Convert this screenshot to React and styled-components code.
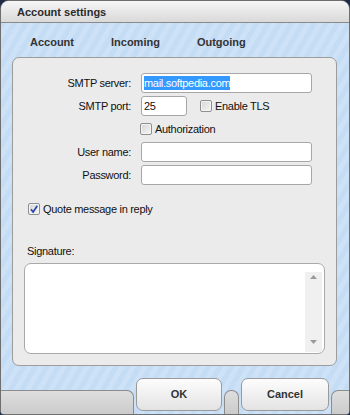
import styled, { createGlobalStyle } from "styled-components";

const GlobalStyle = createGlobalStyle`
  html, body {
    margin: 0;
    padding: 0;
    background: #1f2c48;
  }
  body {
    width: 350px;
    height: 415px;
    overflow: hidden;
    font-family: "Liberation Sans", Arial, sans-serif;
  }
`;

const Window = styled.div`
  width: 350px;
  height: 415px;
  box-sizing: border-box;
  border: 1px solid #6e6e6e;
  border-radius: 9px 9px 4px 4px;
  overflow: hidden;
  display: flex;
  flex-direction: column;
  background: repeating-linear-gradient(
    120deg,
    #c5dcf5 0px,
    #c5dcf5 5px,
    #cde1f7 5px,
    #cde1f7 10px
  );
`;

const TitleBar = styled.div`
  height: 21px;
  display: flex;
  align-items: center;
  padding-left: 16px;
  border-bottom: 1px solid #8a8a8a;
  background: linear-gradient(#f6f6f6, #d9d9d9);
  font-size: 11px;
  font-weight: bold;
  color: #2b2b2b;
`;

const Tabs = styled.div`
  height: 34px;
  box-sizing: border-box;
  padding: 4px 0 0 29px;
  display: flex;
  align-items: center;
  gap: 37px;
`;

const Tab = styled.span`
  font-size: 11px;
  font-weight: bold;
  color: #333;
`;

const Panel = styled.div`
  height: 309px;
  margin: 0 12px 0 11px;
  box-sizing: border-box;
  padding: 15px 11px 11px 11px;
  border: 1px solid #9c9c9c;
  border-radius: 7px;
  background: #ebebeb;
  display: flex;
  flex-direction: column;
  font-size: 11px;
  letter-spacing: -0.3px;
  color: #111;
`;

const FormGrid = styled.div`
  display: grid;
  grid-template-columns: 107px 171px;
  grid-auto-rows: 20px;
  column-gap: 10px;
  row-gap: 3px;
  align-items: center;
`;

const Label = styled.label`
  text-align: right;
`;

const fieldCss = `
  height: 20px;
  box-sizing: border-box;
  border: 1px solid #a7a7a7;
  border-radius: 3px;
  background: #fff;
  padding: 0 2px;
  font-family: inherit;
  font-size: 11px;
  letter-spacing: -0.3px;
  color: #111;
  outline: none;
`;

const Field = styled.input`
  ${fieldCss}
  width: ${(p) => p.$w || 171}px;
`;

const SelectedField = styled.div`
  ${fieldCss}
  width: 171px;
  display: flex;
  align-items: center;
`;

const Selection = styled.span`
  background: #3399ff;
  color: #fff;
  line-height: 14px;
`;

const Inline = styled.div`
  display: flex;
  align-items: center;
  gap: ${(p) => p.$gap || 3}px;
  margin-left: ${(p) => p.$indent || 0}px;
`;

const Box = styled.span`
  width: 12px;
  height: 12px;
  box-sizing: border-box;
  border: 1px solid #8e8f8f;
  border-radius: 2px;
  background: linear-gradient(135deg, #d6d6d6, #f5f5f5);
  box-shadow: inset 0 0 0 1px #f4f4f4;
  display: flex;
  align-items: center;
  justify-content: center;
  flex: none;
`;

const Check = ({ checked }) => (
  <Box>
    {checked && (
      <svg width="10" height="10" viewBox="0 0 10 10">
        <path
          d="M2 5.2 L4.1 8 L8.3 1.8"
          fill="none"
          stroke="#2b44a8"
          strokeWidth="1.6"
        />
      </svg>
    )}
  </Box>
);

const QuoteRow = styled(Inline)`
  height: 14px;
  margin-top: 17px;
`;

const SignatureLabel = styled.div`
  line-height: 14px;
  margin: 28px 0 0 3px;
`;

const TextBox = styled.div`
  flex: 1;
  margin-top: 5px;
  display: flex;
  border: 1px solid #a9a9a9;
  border-radius: 7px;
  background: #fff;
  overflow: hidden;
`;

const TextArea = styled.textarea`
  flex: 1;
  border: none;
  resize: none;
  outline: none;
  background: transparent;
`;

const ScrollTrack = styled.div`
  width: 17px;
  margin: 8px 2px 1px 0;
  background: #f0f0f0;
  display: flex;
  flex-direction: column;
  justify-content: space-between;
  align-items: center;
  padding: 3px 0 8px;
`;

const Arrow = ({ down }) => (
  <svg width="7" height="4" viewBox="0 0 7 4">
    <polygon
      points={down ? "0,0 7,0 3.5,4" : "0,4 7,4 3.5,0"}
      fill="#9a9a9a"
    />
  </svg>
);

const Footer = styled.div`
  height: 48px;
  display: flex;
`;

const GrayPiece = styled.div`
  align-self: flex-end;
  height: 24px;
  box-sizing: border-box;
  background: linear-gradient(#dedede, #cbcbcb);
  border-top: 1px solid #8c8c8c;
  border-left: ${(p) => (p.$edgeLeft ? "1px solid #8c8c8c" : "none")};
  border-right: ${(p) => (p.$edgeRight ? "1px solid #8c8c8c" : "none")};
  border-top-left-radius: ${(p) => (p.$edgeLeft ? 7 : 0)}px;
  border-top-right-radius: ${(p) => (p.$edgeRight ? 7 : 0)}px;
  flex: ${(p) => (p.$w ? `0 0 ${p.$w}px` : 1)};
`;

const Socket = styled.div`
  padding: 12px 2px 3px;
  display: flex;
`;

const Button = styled.button`
  width: ${(p) => p.$w}px;
  border: 1px solid #9a9a9a;
  border-radius: 7px;
  background: linear-gradient(#fdfdfd, #e3e3e3);
  font-family: inherit;
  font-size: 11px;
  font-weight: bold;
  color: #333;
  padding: 0 0 2px;
`;

export default function App() {
  return (
    <>
      <GlobalStyle />
      <Window>
        <TitleBar>Account settings</TitleBar>
        <Tabs>
          <Tab>Account</Tab>
          <Tab>Incoming</Tab>
          <Tab>Outgoing</Tab>
        </Tabs>
        <Panel>
          <FormGrid>
            <Label>SMTP server:</Label>
            <SelectedField>
              <Selection>mail.softpedia.com</Selection>
            </SelectedField>

            <Label>SMTP port:</Label>
            <Inline $gap={13}>
              <Field $w={46} defaultValue="25" />
              <Inline>
                <Check />
                <span>Enable TLS</span>
              </Inline>
            </Inline>

            <span />
            <Inline $indent={-1}>
              <Check />
              <span>Authorization</span>
            </Inline>

            <Label>User name:</Label>
            <Field />

            <Label>Password:</Label>
            <Field type="password" />
          </FormGrid>

          <QuoteRow $indent={4}>
            <Check checked />
            <span>Quote message in reply</span>
          </QuoteRow>

          <SignatureLabel>Signature:</SignatureLabel>
          <TextBox>
            <TextArea />
            <ScrollTrack>
              <Arrow />
              <Arrow down />
            </ScrollTrack>
          </TextBox>
        </Panel>
        <Footer>
          <GrayPiece $edgeRight />
          <Socket>
            <Button $w={86}>OK</Button>
          </Socket>
          <GrayPiece $w={15} $edgeLeft $edgeRight />
          <Socket>
            <Button $w={88}>Cancel</Button>
          </Socket>
          <GrayPiece $w={18} $edgeLeft />
        </Footer>
      </Window>
    </>
  );
}
